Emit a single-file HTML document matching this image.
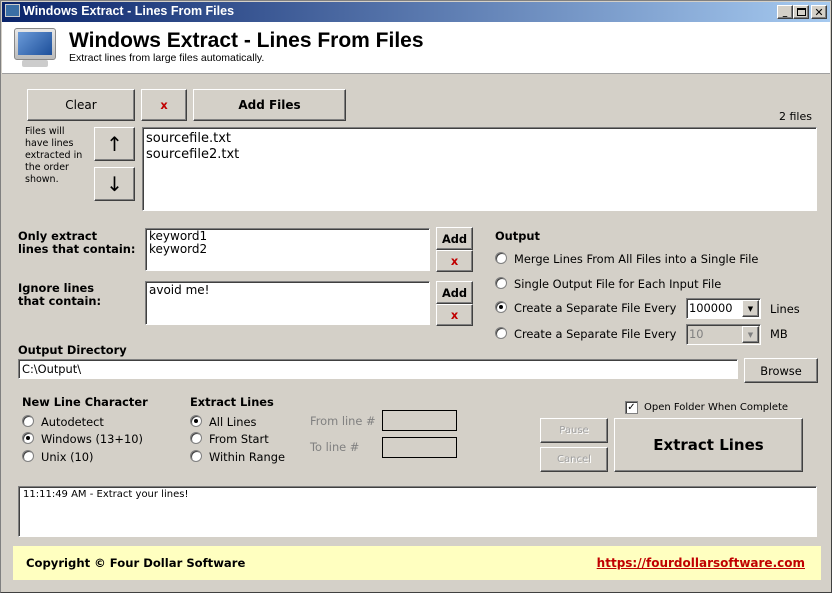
<!DOCTYPE html>
<html><head><meta charset="utf-8"><style>
*{margin:0;padding:0;box-sizing:border-box}
body{width:832px;height:593px;overflow:hidden;background:#d4d0c8;font-family:"DejaVu Sans","Liberation Sans",sans-serif;font-size:11.4px;color:#000;position:relative}
.a{position:absolute;white-space:nowrap}
.btn{position:absolute;background:#d4d0c8;border:1px solid;border-color:#fff #404040 #404040 #fff;box-shadow:inset -1px -1px 0 #808080;display:flex;align-items:center;justify-content:center}
.sunk{position:absolute;background:#fff;border:1px solid;border-color:#808080 #fff #fff #808080;box-shadow:inset 1px 1px 0 #404040}
.b{font-weight:bold}
.rad{position:absolute;width:12px;height:12px;border-radius:50%;background:#fff;border:1px solid #808080;box-shadow:inset 1px 1px 0 #404040}
.rad.on::after{content:"";position:absolute;left:3px;top:3px;width:4px;height:4px;border-radius:50%;background:#000}
.x{color:#c00000;font-weight:bold}
.gray{color:#808080}
</style></head><body>
<div class="a" style="left:0;top:0;width:832px;height:593px;border:1px solid #808080;border-right-color:#404040;border-bottom-color:#404040"></div>
<div class="a" style="left:2px;top:2px;width:828px;height:20px;background:linear-gradient(90deg,#0a246a,#a6caf0)"></div>
<div class="a" style="left:5px;top:4px;width:15px;height:13px;background:#3a6ea5;border:1px solid #ccc"></div>
<div class="a b" style="left:23px;top:4px;color:#fff;font-size:12.5px;font-family:'Liberation Sans',sans-serif">Windows Extract - Lines From Files</div>
<div class="btn" style="left:777px;top:5px;width:16px;height:14px;font-size:9px;font-weight:bold;align-items:flex-end">_</div>
<div class="btn" style="left:793px;top:5px;width:16px;height:14px"><div style="width:9px;height:8px;border:1px solid #000;border-top-width:2px"></div></div>
<div class="btn" style="left:811px;top:5px;width:16px;height:14px;font-weight:bold;font-size:11px">✕</div>
<div class="a" style="left:2px;top:22px;width:828px;height:52px;background:#fff;border-bottom:1px solid #a0a0a0"></div>
<div class="a" style="left:14px;top:28px;width:42px;height:32px;border-radius:3px;background:linear-gradient(#e8e8e8,#bbb);border:1px solid #888"></div>
<div class="a" style="left:18px;top:32px;width:34px;height:23px;background:linear-gradient(135deg,#6a9ad8,#1d4f9a)"></div>
<div class="a" style="left:22px;top:60px;width:26px;height:7px;background:#ccc;border-radius:2px"></div>
<div class="a b" style="left:69px;top:29px;font-size:21px;font-family:'Liberation Sans',sans-serif">Windows Extract - Lines From Files</div>
<div class="a" style="left:69px;top:52px;font-family:'Liberation Sans',sans-serif;font-size:10.5px">Extract lines from large files automatically.</div>

<div class="btn" style="left:27px;top:89px;width:108px;height:32px;font-size:12px">Clear</div>
<div class="btn x" style="left:141px;top:89px;width:46px;height:32px">x</div>
<div class="btn b" style="left:193px;top:89px;width:153px;height:32px;font-size:12px">Add Files</div>
<div class="a" style="left:779px;top:110px;font-size:11px">2 files</div>
<div class="sunk" style="left:142px;top:127px;width:675px;height:84px;font-size:13px;padding:3px 3px;line-height:16px">sourcefile.txt<br>sourcefile2.txt</div>
<div class="a" style="left:25px;top:126px;font-size:9.5px;line-height:12px">Files will<br>have lines<br>extracted in<br>the order<br>shown.</div>
<div class="btn" style="left:94px;top:127px;width:41px;height:34px;font-size:20px">↑</div>
<div class="btn" style="left:94px;top:167px;width:41px;height:34px;font-size:20px">↓</div>

<div class="a b" style="left:18px;top:230px;line-height:13px">Only extract<br>lines that contain:</div>
<div class="sunk" style="left:145px;top:228px;width:285px;height:43px;padding:1px 3px;line-height:13px;font-size:12px">keyword1<br>keyword2</div>
<div class="btn b" style="left:436px;top:227px;width:37px;height:23px">Add</div>
<div class="btn x" style="left:436px;top:250px;width:37px;height:22px">x</div>
<div class="a b" style="left:18px;top:282px;line-height:13px">Ignore lines<br>that contain:</div>
<div class="sunk" style="left:145px;top:281px;width:285px;height:44px;padding:1px 3px;font-size:12px">avoid me!</div>
<div class="btn b" style="left:436px;top:281px;width:37px;height:23px">Add</div>
<div class="btn x" style="left:436px;top:304px;width:37px;height:22px">x</div>

<div class="a b" style="left:495px;top:229px">Output</div>
<div class="rad" style="left:495px;top:252px"></div><div class="a" style="left:514px;top:252px">Merge Lines From All Files into a Single File</div>
<div class="rad" style="left:495px;top:277px"></div><div class="a" style="left:514px;top:277px">Single Output File for Each Input File</div>
<div class="rad on" style="left:495px;top:301px"></div><div class="a" style="left:514px;top:301px">Create a Separate File Every</div>
<div class="sunk" style="left:686px;top:298px;width:75px;height:21px;padding:2px 2px">100000</div>
<div class="btn" style="left:742px;top:300px;width:17px;height:17px;font-size:7px">▼</div>
<div class="a" style="left:770px;top:302px">Lines</div>
<div class="rad" style="left:495px;top:327px"></div><div class="a" style="left:514px;top:327px">Create a Separate File Every</div>
<div class="sunk gray" style="left:686px;top:324px;width:75px;height:21px;padding:2px 2px;background:#d4d0c8">10</div>
<div class="btn gray" style="left:742px;top:326px;width:17px;height:17px;font-size:7px">▼</div>
<div class="a" style="left:770px;top:327px">MB</div>

<div class="a b" style="left:18px;top:343px">Output Directory</div>
<div class="sunk" style="left:18px;top:359px;width:720px;height:20px;padding:2px 3px">C:\Output\</div>
<div class="btn" style="left:744px;top:358px;width:74px;height:25px">Browse</div>

<div class="a b" style="left:22px;top:395px">New Line Character</div>
<div class="rad" style="left:22px;top:415px"></div><div class="a" style="left:41px;top:415px">Autodetect</div>
<div class="rad on" style="left:22px;top:432px"></div><div class="a" style="left:41px;top:432px">Windows (13+10)</div>
<div class="rad" style="left:22px;top:450px"></div><div class="a" style="left:41px;top:450px">Unix (10)</div>
<div class="a b" style="left:190px;top:395px">Extract Lines</div>
<div class="rad on" style="left:190px;top:415px"></div><div class="a" style="left:209px;top:415px">All Lines</div>
<div class="rad" style="left:190px;top:432px"></div><div class="a" style="left:209px;top:432px">From Start</div>
<div class="rad" style="left:190px;top:450px"></div><div class="a" style="left:209px;top:450px">Within Range</div>
<div class="a gray" style="left:310px;top:414px">From line #</div>
<div class="a" style="left:382px;top:410px;width:75px;height:21px;border:1px solid #000"></div>
<div class="a gray" style="left:310px;top:440px">To line #</div>
<div class="a" style="left:382px;top:437px;width:75px;height:21px;border:1px solid #000"></div>

<div class="a" style="left:625px;top:401px;width:13px;height:13px;background:#fff;border:1px solid #808080;box-shadow:inset 1px 1px 0 #404040;font-size:10px;line-height:11px;text-align:center;font-weight:bold">✓</div>
<div class="a" style="left:644px;top:402px;font-size:10px">Open Folder When Complete</div>
<div class="btn gray" style="left:540px;top:418px;width:68px;height:25px;font-size:10px;color:#a0a0a0;text-shadow:1px 1px 0 #fff">Pause</div>
<div class="btn gray" style="left:540px;top:447px;width:68px;height:25px;font-size:10px;color:#a0a0a0;text-shadow:1px 1px 0 #fff">Cancel</div>
<div class="btn b" style="left:614px;top:418px;width:189px;height:54px;font-size:15px">Extract Lines</div>

<div class="sunk" style="left:18px;top:486px;width:799px;height:51px;padding:2px 4px;font-size:10px">11:11:49 AM - Extract your lines!</div>
<div class="a" style="left:13px;top:546px;width:808px;height:34px;background:#ffffc0"></div>
<div class="a b" style="left:26px;top:556px;font-size:11.6px">Copyright © Four Dollar Software</div>
<div class="a b" style="right:27px;top:556px;color:#c00000;text-decoration:underline;font-size:12px">https://fourdollarsoftware.com</div>
</body></html>
